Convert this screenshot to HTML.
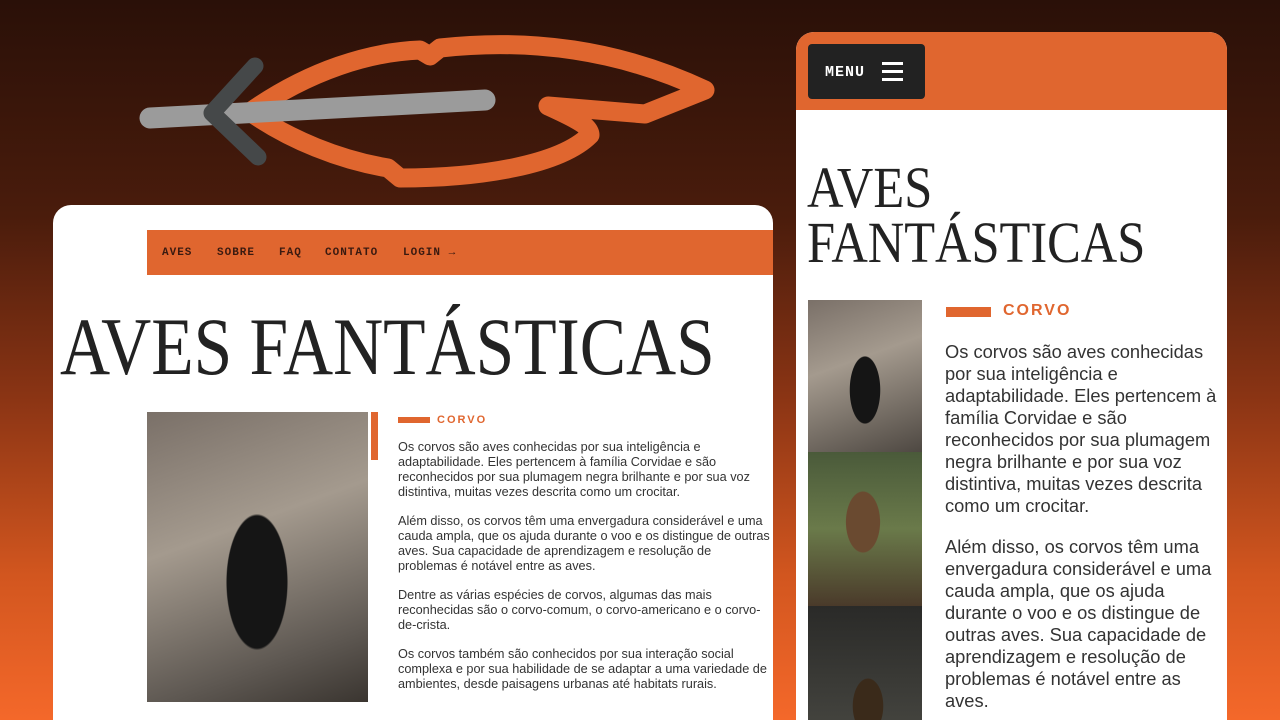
<!DOCTYPE html>
<html style="width:1280px;height:720px;overflow:hidden;background:#f4682a"><head><meta charset="utf-8"><style>
*{margin:0;padding:0;box-sizing:border-box}
body{width:1280px;height:720px;overflow:hidden;position:relative;background:linear-gradient(180deg,#2a1008 0%,#4a1c0c 30%,#8a3414 55%,#d2561f 80%,#f4682a 100%);font-family:"Liberation Sans",sans-serif}
.card{position:absolute;background:#fff;border-radius:18px;overflow:hidden}
.t{font-family:"Liberation Serif",serif;text-transform:uppercase;color:#222;font-weight:normal;white-space:nowrap;transform-origin:0 0}
.nav{position:absolute;left:94px;top:25px;width:640px;height:45px;background:#e0662f;font-family:"Liberation Mono",monospace;font-weight:bold;font-size:11px;color:#3a1a10;letter-spacing:1px}
.nav span{position:absolute;top:17px}
p{color:#333}
.lab{color:#e0662f;font-weight:bold;letter-spacing:2px}
</style></head><body>
<svg style="position:absolute;left:0;top:0" width="760" height="200">
<path d="M250 112 C310 70 370 52 420 50 L430 56 L440 48 C530 38 620 50 705 90 L645 114 L548 106 C570 116 590 125 590 135 C560 165 480 178 400 178 L388 168 C340 160 290 140 250 112 Z" fill="none" stroke="#e0662f" stroke-width="19" stroke-linejoin="round"/>
<path d="M150 118 L485 100" stroke="#9b9b9b" stroke-width="21" stroke-linecap="round"/>
<path d="M255 66 L212 113 L258 157" fill="none" stroke="#454849" stroke-width="17" stroke-linecap="round" stroke-linejoin="round"/>
</svg>
<div class="card" style="left:53px;top:205px;width:720px;height:540px">
<div class="nav"><span style="left:15px">AVES</span><span style="left:70px">SOBRE</span><span style="left:132px">FAQ</span><span style="left:178px">CONTATO</span><span style="left:256px">LOGIN →</span></div>
<div class="t" style="position:absolute;left:7px;top:97px;font-size:82px;line-height:90px;transform:scaleX(0.846)">Aves Fantásticas</div>
<div style="position:absolute;left:94px;top:207px;width:221px;height:290px;background:radial-gradient(ellipse 50px 110px at 110px 170px,#151515 60%,transparent 62%),linear-gradient(160deg,#7a7068,#a49a8e 40%,#5e5852 80%,#3a3530)"></div>
<div style="position:absolute;left:318px;top:207px;width:7px;height:48px;background:#e0662f"></div>
<div style="position:absolute;left:345px;top:212px;width:32px;height:6px;background:#e0662f"></div>
<div class="lab" style="position:absolute;left:384px;top:209px;font-size:11px">CORVO</div>
<div style="position:absolute;left:345px;top:235px;width:374px;font-size:12.7px;line-height:15px">
<p style="margin-bottom:14px">Os corvos são aves conhecidas por sua inteligência e adaptabilidade. Eles pertencem à família Corvidae e são reconhecidos por sua plumagem negra brilhante e por sua voz distintiva, muitas vezes descrita como um crocitar.</p>
<p style="margin-bottom:14px">Além disso, os corvos têm uma envergadura considerável e uma cauda ampla, que os ajuda durante o voo e os distingue de outras aves. Sua capacidade de aprendizagem e resolução de problemas é notável entre as aves.</p>
<p style="margin-bottom:14px">Dentre as várias espécies de corvos, algumas das mais reconhecidas são o corvo-comum, o corvo-americano e o corvo-de-crista.</p>
<p>Os corvos também são conhecidos por sua interação social complexa e por sua habilidade de se adaptar a uma variedade de ambientes, desde paisagens urbanas até habitats rurais.</p>
</div>
</div>
<div class="card" style="left:796px;top:32px;width:431px;height:720px">
<div style="position:absolute;left:0;top:0;width:431px;height:78px;background:#e0662f"></div>
<div style="position:absolute;left:12px;top:12px;width:117px;height:55px;background:#222;border-radius:4px"><span style="position:absolute;left:17px;top:20px;color:#fff;font-family:'Liberation Mono',monospace;font-weight:bold;font-size:15px;letter-spacing:1px">MENU</span>
<div style="position:absolute;left:74px;top:18px;width:21px;height:3px;background:#fff;box-shadow:0 8px 0 #fff,0 16px 0 #fff"></div></div>
<div class="t" style="position:absolute;left:11px;top:128px;font-size:58px;line-height:55px;transform:scaleX(0.87)">Aves<br>Fantásticas</div>
<div style="position:absolute;left:12px;top:268px;width:114px;height:152px;background:radial-gradient(ellipse 25px 55px at 57px 90px,#151515 60%,transparent 62%),linear-gradient(160deg,#7a7068,#a49a8e 40%,#4e4842)"></div>
<div style="position:absolute;left:12px;top:420px;width:114px;height:154px;background:radial-gradient(ellipse 28px 50px at 55px 70px,#6a4a30 60%,transparent 62%),linear-gradient(180deg,#4a5a3a,#6a7a4a 50%,#4a3a2a)"></div>
<div style="position:absolute;left:12px;top:574px;width:114px;height:150px;background:radial-gradient(ellipse 25px 45px at 60px 100px,#3a2a1a 60%,transparent 62%),linear-gradient(180deg,#2a2a28,#4a4a44)"></div>
<div style="position:absolute;left:150px;top:275px;width:45px;height:10px;background:#e0662f"></div>
<div class="lab" style="position:absolute;left:207px;top:270px;font-size:16px">CORVO</div>
<div style="position:absolute;left:149px;top:309px;width:275px;font-size:18.3px;line-height:22px">
<p style="margin-bottom:19px">Os corvos são aves conhecidas por sua inteligência e adaptabilidade. Eles pertencem à família Corvidae e são reconhecidos por sua plumagem negra brilhante e por sua voz distintiva, muitas vezes descrita como um crocitar.</p>
<p>Além disso, os corvos têm uma envergadura considerável e uma cauda ampla, que os ajuda durante o voo e os distingue de outras aves. Sua capacidade de aprendizagem e resolução de problemas é notável entre as aves.</p>
</div>
</div>
</body></html>
